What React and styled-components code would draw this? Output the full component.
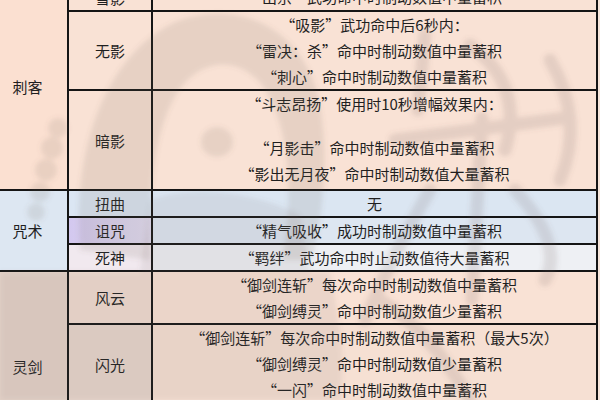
import React from "react";
import styled, {createGlobalStyle} from 'styled-components';

const GlobalStyle = createGlobalStyle`
  body {
    margin: 0;
    background: #f6e5da;
    font-family: "Noto Sans CJK SC", "Noto Sans", sans-serif;
    overflow: hidden;
  }
`

const Page = styled.div`
  position: relative;
  width: 600px;
  height: 400px;
  overflow: hidden;
`

const Grid = styled.div`
  display: grid;
  grid-template-columns: 79px 82px 443px;
  grid-template-rows: 26px 77px 98px 25px 25px 25px 51px 78px 56px;
  gap: 2px;
  padding: 2px;
  width: max-content;
  margin: -18px 0 0 -14px;
  background: #151515;
`

const GroupCell = styled.div`
  grid-column: 1;
  grid-row: span ${props => props.$span};
  display: flex;
  align-items: center;
  justify-content: center;
  background: ${props => props.$bg};
  font-size: 15px;
  color: #1f1f1f;
`

const SkillCell = styled.div`
  grid-column: 2;
  display: flex;
  align-items: center;
  justify-content: center;
  background: ${props => props.$bg};
  font-size: 15px;
  color: #1f1f1f;
`

const EffectCell = styled.div`
  grid-column: 3;
  display: flex;
  flex-direction: column;
  align-items: center;
  justify-content: ${props => props.$top ? 'flex-start' : 'center'};
  background: ${props => props.$bg};
  font-size: 15px;
  line-height: 26px;
  color: #1f1f1f;
  white-space: nowrap;
`

const Line = styled.div`
  height: 26px;
`

const Spacer = styled.div`
  height: 18px;
  flex: none;
`

const Watermark = styled.svg`
  position: absolute;
  left: 0;
  top: 0;
  pointer-events: none;
`

const peach = '#f9e2d5';

const groups = [
  {
    name: '刺客', bg: '#fbe0d1',
    rows: [
      {skill: '雪影', bg: peach, lines: ['“出京”武功命中时制动数值中量蓄积']},
      {skill: '无影', bg: peach, lines: ['“吸影”武功命中后6秒内：', '“雷决：杀”命中时制动数值中量蓄积', '“刺心”命中时制动数值中量蓄积']},
      {skill: '暗影', bg: peach, top: true, lines: ['“斗志昂扬”使用时10秒增幅效果内：', null, '“月影击”命中时制动数值中量蓄积', '“影出无月夜”命中时制动数值大量蓄积']},
    ]
  },
  {
    name: '咒术', bg: '#dde7f2',
    rows: [
      {skill: '扭曲', bg: '#dbe6f3', effectBg: '#dbe6f2', lines: ['无']},
      {skill: '诅咒', bg: 'linear-gradient(90deg, #d3c8ef, #e3def2)', effectBg: '#dde6f1', lines: ['“精气吸收”成功时制动数值中量蓄积']},
      {skill: '死神', bg: '#f1e9ef', effectBg: '#eef0f4', lines: ['“羁绊”武功命中时止动数值待大量蓄积']},
    ]
  },
  {
    name: '灵剑', bg: '#e4d2c8',
    rows: [
      {skill: '风云', bg: '#f0dcd0', effectBg: peach, lines: ['“御剑连斩”每次命中时制动数值中量蓄积', '“御剑缚灵”命中时制动数值少量蓄积']},
      {skill: '闪光', bg: '#e8d6cc', effectBg: '#f6e0d3', lines: ['“御剑连斩”每次命中时制动数值中量蓄积（最大5次）', '“御剑缚灵”命中时制动数值少量蓄积', '“一闪”命中时制动数值中量蓄积']},
      {skill: '', bg: '#e8d6cc', effectBg: '#f6e0d3', lines: []},
    ]
  },
]

// faint illustration that lies over the table, softened with a blur
const Drawing = () => (
  <Watermark width="600" height="400" viewBox="0 0 600 400">
    <defs>
      <filter id="soft" x="-10%" y="-10%" width="120%" height="120%">
        <feGaussianBlur stdDeviation="2.5"/>
      </filter>
    </defs>
    <g filter="url(#soft)">
      <g fill="#6f6058" opacity="0.13">
        <path d="M80 250 C72 150 105 55 175 22 C235 -2 300 25 318 95 C330 150 324 210 312 260 L282 260 C294 195 290 125 262 85 C238 55 198 58 176 95 C155 130 148 190 150 260 Z"/>
        <circle cx="58" cy="128" r="10"/>
        <circle cx="52" cy="148" r="11"/>
        <circle cx="46" cy="170" r="11"/>
        <circle cx="40" cy="192" r="10"/>
        <circle cx="36" cy="212" r="9"/>
        <ellipse cx="217" cy="142" rx="16" ry="15"/>
        <ellipse cx="143" cy="146" rx="9" ry="13"/>
      </g>
      <g fill="#6f6058" opacity="0.1">
        <path d="M0 272 L330 272 C340 320 345 360 340 400 L0 400 Z"/>
        <path d="M150 200 C190 185 250 190 300 215 L310 272 L140 272 Z"/>
        <ellipse cx="300" cy="360" rx="30" ry="40"/>
      </g>
      <g stroke="#6f6058" strokeWidth="13" strokeLinecap="round" fill="none" opacity="0.15">
        <path d="M425 35 L418 110"/>
        <path d="M470 45 Q525 85 505 150"/>
        <path d="M395 140 L565 118"/>
        <path d="M482 118 L472 300"/>
        <path d="M430 190 Q395 250 365 320"/>
        <path d="M515 190 Q565 245 545 280"/>
        <path d="M550 60 Q585 120 560 180"/>
        <path d="M380 300 Q430 330 470 400"/>
      </g>
    </g>
  </Watermark>
)

const App = () => {
  return (
    <Page>
      <GlobalStyle/>
      <Grid>
        {groups.map(group => (
          <React.Fragment key={group.name}>
            <GroupCell $span={group.rows.length} $bg={group.bg}>{group.name}</GroupCell>
            {group.rows.map((row, i) => (
              <React.Fragment key={i}>
                <SkillCell $bg={row.bg}>{row.skill}</SkillCell>
                <EffectCell $bg={row.effectBg || row.bg} $top={row.top}>
                  {row.lines.map((line, j) => line === null
                    ? <Spacer key={j}/>
                    : <Line key={j}>{line}</Line>)}
                </EffectCell>
              </React.Fragment>
            ))}
          </React.Fragment>
        ))}
      </Grid>
      <Drawing/>
    </Page>
  )
}

export default App
